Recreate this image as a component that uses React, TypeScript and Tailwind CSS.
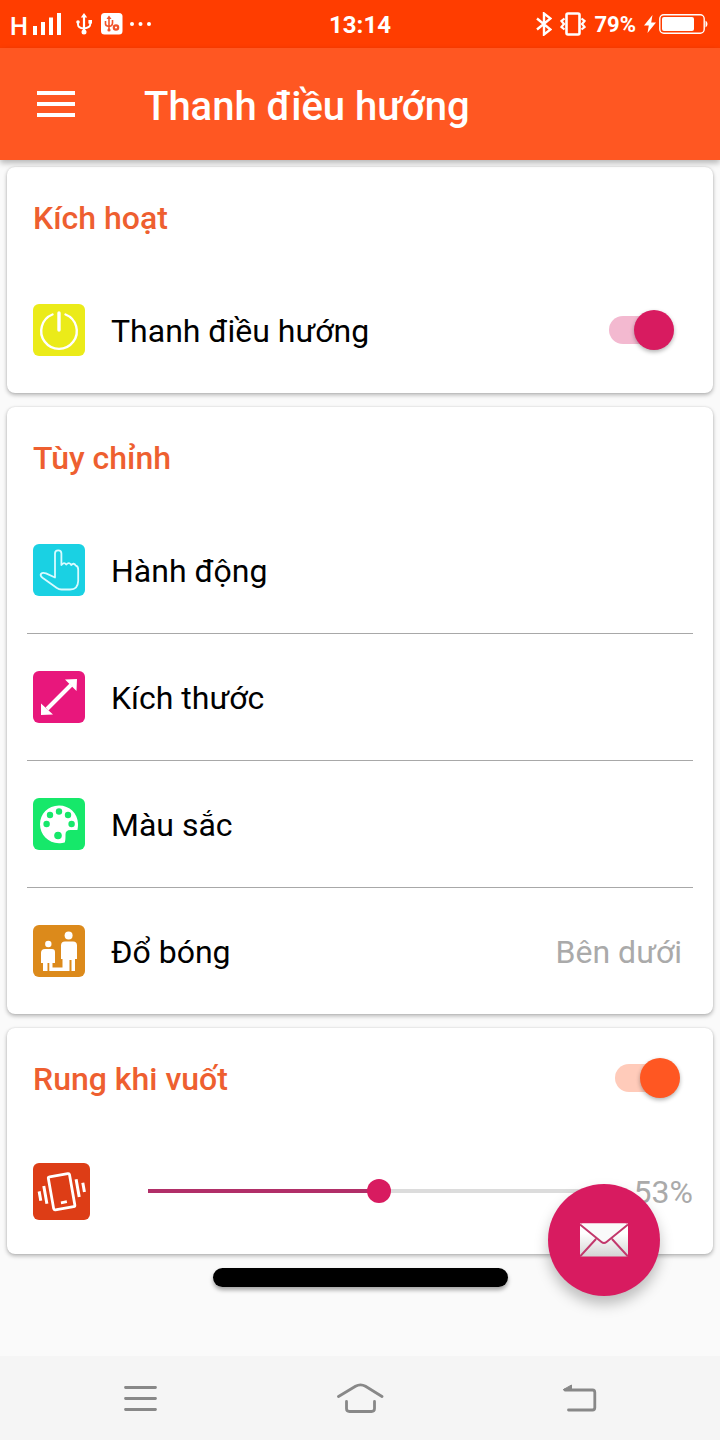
import { useState } from "react";
import type { ReactNode } from "react";
import clsx from "clsx";

interface RowProps {
    icon: ReactNode;
    color: string;
    label: string;
    value?: string;
}

const POWER = (
    <>
        <path d="M19.5 10.500a17.800 17.800 0 1 0 13 0" fill="none" stroke="#fff" strokeWidth="2.400" strokeLinecap="round" />
        <path d="M26 9v17" stroke="#fff" strokeWidth="3.400" strokeLinecap="round" />
    </>
);

const HAND = (
    <path
        d="M22 33.500V9.500a3.200 3.200 0 0 1 6.400 0V21q2.800-3.600 4.800-.4 3-3 5 .4 2.800-2.800 4.600.6 2.400.6 2.400 4v11.400q-.3 8.500-8 8.500H28.500q-2.500 0-5-1.700L9.500 33.800q-2.600-2-1.500-4 1.500-1.600 5-.4z"
        fill="none"
        stroke="#d9fbff"
        strokeWidth="1.8"
        strokeLinejoin="round"
    />
);

const RESIZE = (
    <>
        <path d="M14 38L38 14" stroke="#fff" strokeWidth="4" />
        <path d="M32 8.500l12-.5-.5 12zM8 32.500l12 11-12 .5z" fill="#fff" />
    </>
);

const PALETTE = (
    <>
        <path d="M26 7.500c10.500 0 19 8 19 18.500 0 3-.2 4.500-.6 6H37.500c-3.500 0-5 1.500-5 4.500 0 3.500 0 6-.8 8-1.500.6-3.700.7-5.700.7C15 45.200 7 36.500 7 26.300S15 7.500 26 7.500z" fill="#fff" />
        <g fill="#16e86a">
            <circle cx="13.600" cy="26" r="3.200" />
            <circle cx="17" cy="17" r="3.200" />
            <circle cx="26" cy="13.500" r="3.200" />
            <circle cx="35" cy="17" r="3.200" />
            <circle cx="38.600" cy="26" r="3.200" />
            <circle cx="25" cy="37.500" r="3.800" />
        </g>
    </>
);

const SHADOW = (
    <g fill="#fff">
        <circle cx="15.300" cy="19" r="3.200" />
        <path d="M12 24h7q3 0 3 3v11h-2.500v8H16.300v-8h-1.800v8H10V38H8V28q0-4 4-4z" />
        <circle cx="35.600" cy="10.500" r="4" />
        <path d="M32 16.500h8q4 0 4 4V34h-2v12h-3.500V35h-2v11H33V34h-5V20.500q0-4 4-4z" />
        <path d="M17 42.500h13V46H17z" />
        <path d="M29.500 34H33v12h-3.500z" />
    </g>
);

function Tile({ color, children }: { color: string; children: ReactNode }) {
    return (
        <svg viewBox="0 0 52 52" className={clsx("size-[52px] shrink-0 rounded-md", color)} aria-hidden="true">
            {children}
        </svg>
    );
}

function Card({ children }: { children: ReactNode }) {
    return <section className="rounded-lg bg-white shadow-[0_2px_4px_rgba(0,0,0,0.28),0_0_2px_rgba(0,0,0,0.12)]">{children}</section>;
}

function CardTitle({ children }: { children: ReactNode }) {
    return <h2 className="pt-[2px] text-[32px] leading-[40px] font-medium text-[#ee5f30]">{children}</h2>;
}

function Switch({ id, tone }: { id: string; tone: "pink" | "orange" }) {
    const [on, setOn] = useState(true);
    return (
        <input
            id={id}
            type="checkbox"
            role="switch"
            aria-label={id === "vibrate" ? "Rung khi vuốt" : undefined}
            checked={on}
            onChange={(e) => setOn(e.target.checked)}
            className={clsx(
                "grid h-10 w-[65px] shrink-0 cursor-pointer appearance-none items-center",
                "before:col-start-1 before:row-start-1 before:h-7 before:w-[60px] before:rounded-full before:content-['']",
                "after:col-start-1 after:row-start-1 after:size-10 after:rounded-full after:shadow-[0_2px_4px_rgba(0,0,0,0.3)] after:content-[''] checked:after:justify-self-end",
                tone === "pink" ? "before:bg-[#f3b9d0] after:bg-[#d81b60]" : "before:bg-[#ffcbba] after:bg-[#ff5722]"
            )}
        />
    );
}

function Row({ icon, color, label, value }: RowProps) {
    return (
        <li className="border-b border-[#a8a8a8] last:border-b-0">
            <button className="flex h-[126px] w-full items-center gap-[26px] pr-[11px] pl-[6px] text-left text-[32px] leading-[40px]">
                <Tile color={color}>{icon}</Tile>
                <span className="flex-1 pt-[2px]">{label}</span>
                {value && <span className="pt-[2px] text-[#aaaaaa]">{value}</span>}
            </button>
        </li>
    );
}

function StatusBar() {
    return (
        <div className="grid h-12 grid-cols-[1fr_auto_1fr] items-center bg-[#ff3d00] text-white">
            <div className="flex items-center pl-[10px]">
                <span className="mr-[5px] pt-[6px] font-[Inter] text-2xl leading-6 font-semibold">H</span>
                <svg viewBox="0 0 28 22" className="mr-[15px] h-[22px] w-7" fill="currentColor">
                    <path d="M0 13h4v9H0zM8 9h4v13H8zM16 4.500h4V22h-4zM24 0h4v22h-4z" />
                </svg>
                <svg viewBox="0 0 16 22" className="mr-[9px] h-[22px] w-4" fill="currentColor">
                    <path d="M8 0l3.200 4.500H4.800zM6.900 4h2.200v14H6.900z" />
                    <circle cx="8" cy="19" r="2.500" />
                    <circle cx="2" cy="9" r="1.800" />
                    <path d="M12.400 7H16v3.600h-3.600z" />
                    <path d="M2 9v2.500q0 3.500 6 4M14.200 9v2.500q0 3-6.200 4" fill="none" stroke="currentColor" strokeWidth="1.900" />
                </svg>
                <svg viewBox="0 0 22 22" className="mr-[6px] size-[22px]">
                    <rect width="21.500" height="21.500" rx="3.500" fill="#fff" />
                    <g fill="none" stroke="#f0532a" strokeWidth="1.600">
                        <path d="M8 4v13M4.500 8v3q0 2 3.500 2.500M11.500 7v3q0 3-3.500 3.500" />
                        <circle cx="15" cy="14.500" r="2.200" strokeWidth="2.200" />
                    </g>
                    <path d="M8 2.500l2.500 3.500h-5z" fill="#f0532a" />
                    <circle cx="8" cy="17" r="1.600" fill="#f0532a" />
                </svg>
                <svg viewBox="0 0 24 4" className="h-1 w-6" fill="currentColor">
                    <circle cx="3" cy="2" r="2" />
                    <circle cx="11.500" cy="2" r="2" />
                    <circle cx="20" cy="2" r="2" />
                </svg>
            </div>
            <time className="pt-[2px] text-2xl leading-8 font-bold">13:14</time>
            <div className="flex items-center justify-end pr-3">
                <svg viewBox="0 0 16 24" className="mr-2 h-6 w-4" fill="none" stroke="currentColor" strokeWidth="2.400">
                    <path d="M1 6.500l13.500 11L8 22.500v-21l6.500 5L1 17.500" />
                </svg>
                <svg viewBox="0 0 26 24" className="mr-2 h-6 w-[26px]" fill="none" stroke="currentColor">
                    <rect x="6.500" y="1.500" width="13" height="21" rx="1.500" strokeWidth="2.600" />
                    <path d="M4.500 6.500L1.500 9 4 12 1.500 15l3 2.500M21.500 6.500l3 2.500-2.500 3 2.500 3-3 2.500" strokeWidth="2.200" />
                </svg>
                <span className="mr-2 pt-[2px] text-[22px] leading-8 font-bold">79%</span>
                <svg viewBox="0 0 12 18" className="mr-[3px] h-[18px] w-3" fill="currentColor">
                    <path d="M8.500 0L0 10.500h4.800L3.500 18 12 7.500H7.200z" />
                </svg>
                <svg viewBox="0 0 49 20" className="h-5 w-[49px]">
                    <rect x=".8" y=".8" width="44.400" height="18.400" rx="4" fill="none" stroke="#fff" strokeWidth="1.400" />
                    <rect x="3" y="3" width="32" height="14" rx="2" fill="#fff" />
                    <path d="M46.500 6.500q2 1 2 3.500t-2 3.500z" fill="#fff" />
                </svg>
            </div>
        </div>
    );
}

function VibrateSlider() {
    const [strength, setStrength] = useState(53);
    return (
        <div className="flex h-[126px] items-center pr-5 pl-[26px]">
            <svg viewBox="0 0 57 57" className="mr-[46px] size-[57px] shrink-0 rounded-md bg-[#dd3d16]" fill="none" stroke="#fff" aria-hidden="true">
                <g transform="rotate(-10 28.500 28.500)" strokeWidth="2.800">
                    <rect x="17.800" y="12" width="21.500" height="33.500" rx="1.500" />
                    <path d="M26 39.500h6" />
                    <path d="M12 20v18M6.500 24.500v9.500M45 19v18M51 23.500v9.500" strokeWidth="3" />
                </g>
            </svg>
            <div className="grid flex-1 items-center">
                <div className="col-start-1 row-start-1 mx-3 h-1 bg-[#dcdcdc]">
                    <div className="h-full bg-[#b12f68]" style={{ width: `${strength}%` }} />
                </div>
                <input
                    type="range"
                    aria-label="Rung khi vuốt"
                    value={strength}
                    onChange={(e) => setStrength(Number(e.target.value))}
                    className="col-start-1 row-start-1 h-6 w-full appearance-none bg-transparent [&::-webkit-slider-thumb]:size-6 [&::-webkit-slider-thumb]:appearance-none [&::-webkit-slider-thumb]:rounded-full [&::-webkit-slider-thumb]:bg-[#d81b60]"
                />
            </div>
            <output className="ml-[38px] pt-[2px] text-[32px] leading-[40px] text-[#aaaaaa]">{strength}%</output>
        </div>
    );
}

function NavBar() {
    return (
        <nav className="grid h-[84px] shrink-0 grid-cols-[280px_1fr_280px] bg-[#f5f5f5] text-[#888888]">
            <button aria-label="Menu" className="flex items-center justify-center">
                <svg viewBox="0 0 34 26" className="h-[26px] w-[34px]" fill="none" stroke="currentColor" strokeWidth="2.800" strokeLinecap="round">
                    <path d="M2.500 2.500h30M2.500 13.500h30M2.500 24.500h30" />
                </svg>
            </button>
            <button aria-label="Home" className="flex items-center justify-center">
                <svg viewBox="0 0 48 30" className="h-[30px] w-12" fill="none" stroke="currentColor" strokeWidth="2.800" strokeLinecap="round">
                    <path d="M2.500 13.500L19.500 3.300q5-3 10 0L46 13.500" />
                    <path d="M10.500 18.500v7q0 3 3 3h22q3 0 3-3v-7" />
                </svg>
            </button>
            <button aria-label="Back" className="flex items-center justify-center">
                <svg viewBox="0 0 34 28" className="h-7 w-[34px]" fill="none" stroke="currentColor" strokeWidth="2.800" strokeLinecap="round">
                    <path d="M2 6h27.500q2.300 0 2.300 2.500v15q0 2.500-2.300 2.500H5.500" />
                    <path d="M.5 5.500L8.500 1v4.500z" fill="currentColor" strokeWidth="1" />
                </svg>
            </button>
        </nav>
    );
}

export default function App() {
    return (
        <div className="flex min-h-screen flex-col bg-[#fafafa] font-[Roboto,sans-serif] text-black">
            <StatusBar />

            {/* Toolbar */}
            <header className="z-10 flex h-28 items-center bg-[#ff5722] pl-[37px] text-white shadow-[0_3px_6px_rgba(0,0,0,0.28)]">
                <button aria-label="Menu" className="mr-[69px]">
                    <svg viewBox="0 0 38 26" className="h-[26px] w-[38px]" fill="currentColor">
                        <path d="M0 0h38v4H0zM0 11h38v4H0zM0 22h38v4H0z" />
                    </svg>
                </button>
                <h1 className="pt-[6px] text-[40px] leading-[48px] font-medium">Thanh điều hướng</h1>
            </header>

            <main className="relative flex flex-1 flex-col gap-[14px] px-[7px] pt-[7px]">
                <Card>
                    <div className="flex h-[100px] items-center px-[26px]">
                        <CardTitle>Kích hoạt</CardTitle>
                    </div>
                    <div className="flex h-[126px] items-center gap-[26px] pr-[39px] pl-[26px]">
                        <Tile color="bg-[#ebeb19]">{POWER}</Tile>
                        <label htmlFor="navbar" className="flex-1 pt-[2px] text-[32px] leading-[40px]">Thanh điều hướng</label>
                        <Switch id="navbar" tone="pink" />
                    </div>
                </Card>

                <Card>
                    <div className="flex h-[100px] items-center px-[26px]">
                        <CardTitle>Tùy chỉnh</CardTitle>
                    </div>
                    <ul className="px-5">
                        <Row icon={HAND} color="bg-[#1ad1e3]" label="Hành động" />
                        <Row icon={RESIZE} color="bg-[#e8177c]" label="Kích thước" />
                        <Row icon={PALETTE} color="bg-[#16e86a]" label="Màu sắc" />
                        <Row icon={SHADOW} color="bg-[#dc8a1b]" label="Đổ bóng" value="Bên dưới" />
                    </ul>
                </Card>

                <Card>
                    <div className="flex h-[100px] items-center justify-between pr-[33px] pl-[26px]">
                        <CardTitle>Rung khi vuốt</CardTitle>
                        <Switch id="vibrate" tone="orange" />
                    </div>
                    <VibrateSlider />
                </Card>

                {/* Preview of the swipe bar */}
                <div className="h-[19px] w-[295px] self-center rounded-full bg-black shadow-[0_3px_4px_rgba(0,0,0,0.35)]" />

                <button
                    aria-label="Email"
                    className="absolute right-[60px] bottom-[60px] flex size-28 items-center justify-center rounded-full bg-[#d81b60] shadow-[0_8px_14px_rgba(0,0,0,0.25)]"
                >
                    <svg viewBox="0 0 48 34" className="h-[34px] w-12">
                        <defs>
                            <linearGradient id="paper" x1="0" y1="0" x2="0" y2="1">
                                <stop offset="0.3" stopColor="#fff" />
                                <stop offset="1" stopColor="#d4d4d4" />
                            </linearGradient>
                        </defs>
                        <path d="M0 .5h48v33H0z" fill="url(#paper)" />
                        <path d="M2 .5h44L26 18.500q-2 1.600-4 0z" fill="#fafafa" />
                        <path d="M0 1.500L21.500 19q2.500 2 5 0L48 1.500M0 33.500L16 16M48 33.500L32 16" fill="none" stroke="#c2386c" strokeWidth="2" />
                    </svg>
                </button>
            </main>

            <NavBar />
        </div>
    );
}
